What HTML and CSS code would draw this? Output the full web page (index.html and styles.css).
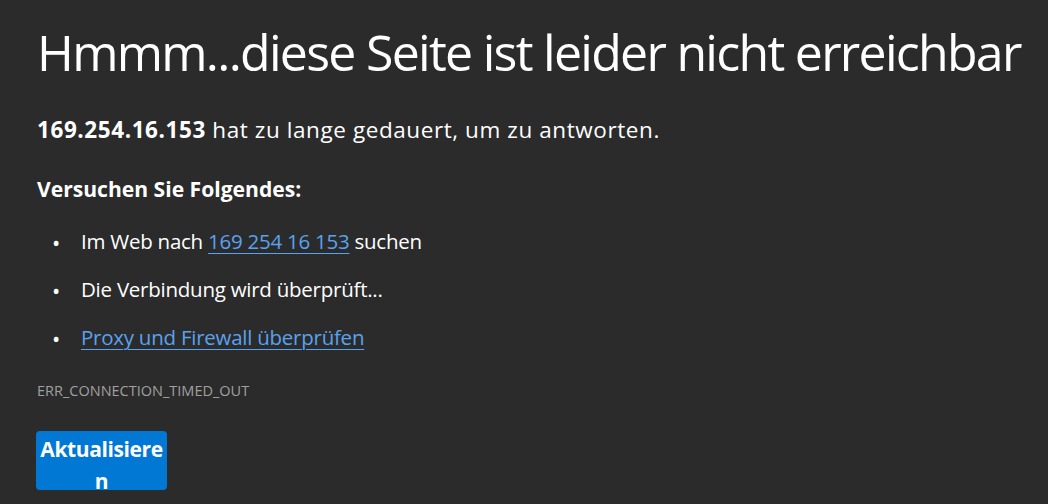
FILE: index.html
```html
<!DOCTYPE html>
<html lang="de">
<head>
<meta charset="utf-8">
<title>Seite nicht erreichbar</title>
<link rel="stylesheet" href="styles.css">
</head>
<body>
<main class="page">
  <h1 class="title">Hmmm...diese Seite ist leider nicht erreichbar</h1>
  <p class="summary"><strong>169.254.16.153</strong> hat zu lange gedauert, um zu antworten.</p>
  <h2 class="suggest-head">Versuchen Sie Folgendes:</h2>
  <ul class="suggest-list">
    <li>Im Web nach <a class="link" href="#">169 254 16 153</a> suchen</li>
    <li>Die Verbindung wird überprüft...</li>
    <li><a class="link" href="#">Proxy und Firewall überprüfen</a></li>
  </ul>
  <div class="error-code">ERR_CONNECTION_TIMED_OUT</div>
  <button class="reload" type="button"><span class="reload-label">Aktualisieren</span></button>
</main>
</body>
</html>
```

FILE: styles.css
```css
html, body {
  margin: 0;
  padding: 0;
  background: #2b2b2b;
}
body {
  font-family: "Open Sans", "Noto Sans", sans-serif;
  color: #ffffff;
  height: 504px;
  overflow: hidden;
}
.page {
  padding: 0 0 0 37px;
}
.title {
  margin: 0;
  padding-top: 22px;
  font-size: 50px;
  font-weight: 400;
  line-height: 60px;
  letter-spacing: -1.72px;
  white-space: nowrap;
}
.summary {
  margin: 33px 0 0;
  font-size: 22.5px;
  line-height: 30px;
  letter-spacing: 0.58px;
}
.summary strong {
  font-weight: 700;
}
.suggest-head {
  margin: 29px 0 0;
  font-size: 21.1px;
  font-weight: 700;
  line-height: 30px;
}
.suggest-list {
  margin: 23px 0 0;
  padding: 0 0 0 15px;
  list-style: none;
  font-size: 20.5px;
  line-height: 28px;
  letter-spacing: -0.25px;
}
.suggest-list li {
  margin-bottom: 20px;
}
.suggest-list li:last-child {
  margin-bottom: 0;
}
.suggest-list li::before {
  content: "\2022";
  display: inline-block;
  width: 29px;
  font-size: 22px;
  line-height: 1;
  vertical-align: -2px;
}
.link {
  color: #5aa2ee;
  text-decoration: underline;
  text-decoration-thickness: 1px;
  text-underline-offset: 4px;
}
.error-code {
  margin-top: 30px;
  font-size: 14.5px;
  color: #a0a0a0;
  line-height: 20px;
}
.reload {
  display: flex;
  flex-direction: column;
  justify-content: flex-start;
  margin: 30px 0 0 -1px;
  width: 131px;
  height: 59px;
  box-sizing: border-box;
  padding: 2px 0 0;
  border: none;
  border-radius: 4px;
  background: #0078d4;
  color: #ffffff;
  font-family: "Open Sans", "Noto Sans", sans-serif;
  font-size: 21px;
  font-weight: 700;
  line-height: 32px;
  letter-spacing: -0.4px;
  overflow: hidden;
  cursor: pointer;
}
.reload-label {
  display: block;
  width: 100%;
  text-align: center;
  overflow-wrap: anywhere;
  word-break: break-all;
}
```
